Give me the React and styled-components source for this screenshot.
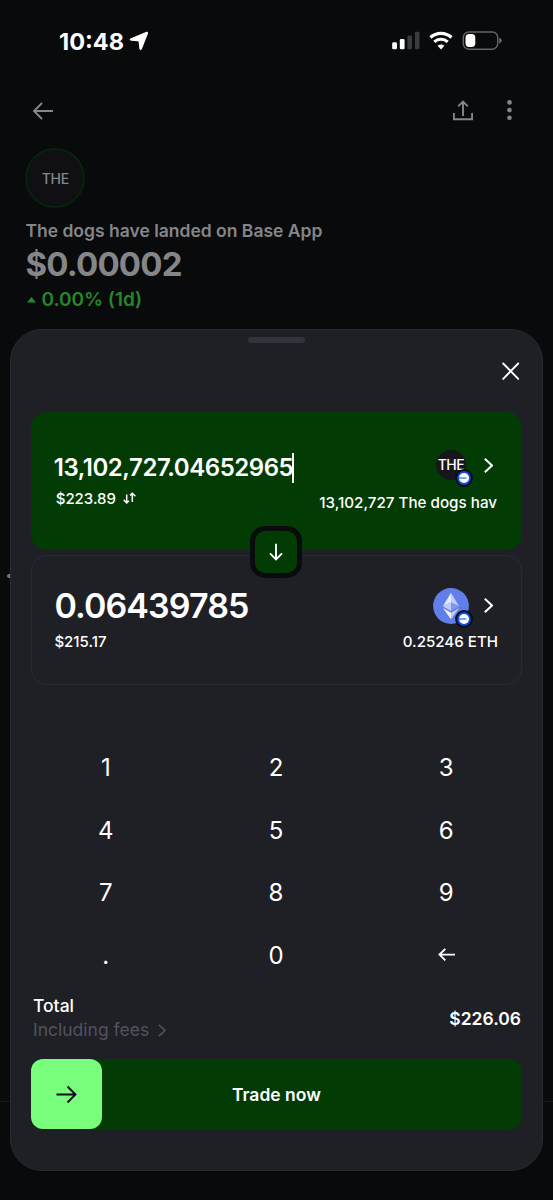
import React, { useState } from 'react';
import styled, { createGlobalStyle } from 'styled-components';

const KEYS = ['1', '2', '3', '4', '5', '6', '7', '8', '9', '.', '0', 'back'];

function ChevronIcon({ width = 8, height = 15, stroke = 2 }) {
  return (
    <svg width={width} height={height} viewBox={`0 0 ${width} ${height}`}>
      <path
        d={`M0.8 0.8L${width - 1} ${height / 2}L0.8 ${height - 0.8}`}
        fill="none"
        stroke="currentColor"
        strokeWidth={stroke}
      />
    </svg>
  );
}

function StatusIcons() {
  return (
    <svg width="112" height="20" viewBox="0 0 112 20">
      <rect x="2.2" y="11.3" width="4.8" height="7" rx="1.4" fill="#fff" />
      <rect x="9.8" y="8.1" width="4.8" height="10.2" rx="1.4" fill="#fff" />
      <rect x="17.4" y="4.6" width="4.6" height="13.7" rx="1.4" fill="#3a3b3d" />
      <rect x="24.9" y="0.8" width="4.6" height="17.5" rx="1.4" fill="#3a3b3d" />
      <path
        d="M40.5 6.5A15.4 15.4 0 0 1 61.5 6.5"
        fill="none"
        stroke="#fff"
        strokeWidth="3.2"
      />
      <path
        d="M44.3 10.9A9.8 9.8 0 0 1 57.7 10.9"
        fill="none"
        stroke="#fff"
        strokeWidth="3.1"
      />
      <path d="M51 18.4L47.6 14.8A5.4 5.4 0 0 1 54.4 14.8Z" fill="#fff" />
      <rect
        x="73.3"
        y="1"
        width="34.4"
        height="17.2"
        rx="5.4"
        fill="none"
        stroke="#646568"
        strokeWidth="1.4"
      />
      <rect x="75.5" y="3.1" width="9.8" height="12.8" rx="3.6" fill="#fff" />
      <path d="M109.3 6.8Q111.6 7.4 111.6 9.6T109.3 12.5Z" fill="#77787a" />
    </svg>
  );
}

function BaseBadge() {
  return (
    <Badge>
      <svg width="18" height="18" viewBox="0 0 18 18">
        <circle cx="9" cy="9" r="8.9" fill="#0a0b0d" />
        <circle cx="9" cy="9" r="6.9" fill="#0a4fe0" />
        <circle cx="9" cy="9" r="5" fill="#fff" />
        <path d="M4 9H11.5" stroke="#4b7bea" strokeWidth="1.4" />
      </svg>
    </Badge>
  );
}

function EthIcon() {
  return (
    <svg width="36" height="36" viewBox="0 0 36 36">
      <circle cx="18" cy="18" r="17.9" fill="#627eea" />
      <path d="M18 4.8L9.9 18.3L18 14.6Z" fill="#e4e9fc" />
      <path d="M18 4.8L26.1 18.3L18 14.6Z" fill="#c0cbf7" />
      <path d="M9.9 18.3L18 14.6V23Z" fill="#c0cbf7" />
      <path d="M26.1 18.3L18 14.6V23Z" fill="#8197ee" />
      <path d="M9.9 19.9L18 24.7V31.2Z" fill="#f2f4fe" />
      <path d="M26.1 19.9L18 24.7V31.2Z" fill="#c0cbf7" />
    </svg>
  );
}

function App() {
  const [amount, setAmount] = useState('13,102,727.04652965');

  const pressKey = key => {
    if (key === 'back') {
      setAmount(amount.slice(0, -1));
    } else {
      setAmount(amount + key);
    }
  };

  return (
    <Screen>
      <GlobalStyle />
      <BackgroundDot />
      <BackgroundLine />
      <StatusBar>
        <Clock>
          10:48
          <svg width="20" height="20" viewBox="0 0 20 20">
            <path
              d="M16.9 1Q19.7 0.2 18.8 3L13.1 17.6Q11.6 20.6 10.3 17.6L9.7 11.2Q9.6 10.4 8.8 10.3L2.2 9.8Q-0.8 8.8 1.9 7.2Z"
              fill="#fff"
            />
          </svg>
        </Clock>
        <StatusIcons />
      </StatusBar>
      <NavBar>
        <svg width="21" height="18" viewBox="0 0 21 18">
          <path
            d="M21 9H2M10 1L2 9L10 17"
            fill="none"
            stroke="currentColor"
            strokeWidth="1.9"
          />
        </svg>
        <NavActions>
          <svg width="20" height="21" viewBox="0 0 20 21">
            <path
              d="M0.9 13V19.2H19.1V13M10 16V1.6M5.2 6.4L10 1.6L14.8 6.4"
              fill="none"
              stroke="currentColor"
              strokeWidth="1.9"
            />
          </svg>
          <svg width="5" height="21" viewBox="0 0 5 21">
            <circle cx="2.5" cy="2.4" r="2.3" fill="currentColor" />
            <circle cx="2.5" cy="10.1" r="2.3" fill="currentColor" />
            <circle cx="2.5" cy="17.8" r="2.3" fill="currentColor" />
          </svg>
        </NavActions>
      </NavBar>
      <TokenHeader>
        <TokenLogo>THE</TokenLogo>
        <TokenName>The dogs have landed on Base App</TokenName>
        <TokenPrice>$0.00002</TokenPrice>
        <TokenChange>
          <svg width="9" height="6" viewBox="0 0 9 6">
            <path d="M0 5.6L4.5 0L9 5.6Z" fill="currentColor" />
          </svg>
          0.00% (1d)
        </TokenChange>
      </TokenHeader>

      <Sheet>
        <Handle />
        <CloseButton aria-label="Close">
          <svg width="18" height="18" viewBox="0 0 18 18">
            <path
              d="M1.2 1.5L16.2 16.9M16.2 1.5L1.2 16.9"
              stroke="currentColor"
              strokeWidth="1.9"
              strokeLinecap="round"
            />
          </svg>
        </CloseButton>

        <PayCard>
          <CardRow>
            <PayAmount>
              {amount}
              <Caret />
            </PayAmount>
            <TokenSelect>
              <TokenIcon>
                <SmallLogo>THE</SmallLogo>
                <BaseBadge />
              </TokenIcon>
              <ChevronIcon width={9} />
            </TokenSelect>
          </CardRow>
          <PayDetails>
            <Fiat>
              $223.89
              <svg width="14" height="13" viewBox="0 0 14 13">
                <path
                  d="M3.7 2.6V10.9M0.6 7.8L3.7 10.9L5.9 8.7M9.3 10V1.2M7.1 3.4L9.3 1.2L12.4 4.3"
                  fill="none"
                  stroke="currentColor"
                  strokeWidth="1.5"
                />
              </svg>
            </Fiat>
            <Balance $top={5} $size={15.2}>
              13,102,727 The dogs hav
            </Balance>
          </PayDetails>
          <SwapButton aria-label="Swap">
            <svg width="14" height="18" viewBox="0 0 14 18">
              <path
                d="M7 0.8V16M1 10.3L7 16.3L13 10.3"
                fill="none"
                stroke="currentColor"
                strokeWidth="1.9"
              />
            </svg>
          </SwapButton>
        </PayCard>

        <ReceiveCard>
          <CardRow>
            <ReceiveAmount>0.06439785</ReceiveAmount>
            <TokenSelect>
              <TokenIcon>
                <EthIcon />
                <BaseBadge />
              </TokenIcon>
              <ChevronIcon width={9} />
            </TokenSelect>
          </CardRow>
          <ReceiveDetails>
            <Fiat>$215.17</Fiat>
            <Balance $top={1} $size={15.1}>
              0.25246 ETH
            </Balance>
          </ReceiveDetails>
        </ReceiveCard>

        <Keypad>
          {KEYS.map(key => (
            <Key key={key} onClick={() => pressKey(key)}>
              {key === 'back' ? (
                <svg width="17" height="14" viewBox="0 0 17 14">
                  <path
                    d="M17 6.6H1.5M7.3 0.8L1.5 6.6L7.3 12.4"
                    fill="none"
                    stroke="currentColor"
                    strokeWidth="1.9"
                  />
                </svg>
              ) : (
                key
              )}
            </Key>
          ))}
        </Keypad>

        <Summary>
          <div>
            <TotalLabel>Total</TotalLabel>
            <Fees>
              Including fees
              <ChevronIcon width={8} height={13} stroke={1.6} />
            </Fees>
          </div>
          <TotalValue>$226.06</TotalValue>
        </Summary>

        <Slider>
          <SliderThumb>
            <svg width="21" height="18" viewBox="0 0 21 18">
              <path
                d="M0.5 9.5H19.2M11.5 1.5L19.5 9.5L11.5 17.5"
                fill="none"
                stroke="currentColor"
                strokeWidth="1.9"
              />
            </svg>
          </SliderThumb>
          <SliderLabel>Trade now</SliderLabel>
        </Slider>
      </Sheet>
    </Screen>
  );
}

const GlobalStyle = createGlobalStyle`
  * {
    box-sizing: border-box;
  }
  body {
    margin: 0;
    background: #090a0c;
    font-family: Inter, 'Liberation Sans', sans-serif;
  }
  svg {
    display: block;
    flex-shrink: 0;
  }
  button {
    padding: 0;
    border: none;
    background: none;
    color: inherit;
    font: inherit;
  }
`;

const Screen = styled.main`
  position: relative;
  width: 553px;
  height: 1200px;
  overflow: hidden;
  background: #090a0c;
  color: #fff;
`;

const BackgroundDot = styled.div`
  position: absolute;
  top: 573.5px;
  left: 7px;
  width: 5px;
  height: 4px;
  border-radius: 2px;
  background: #77787a;
`;

const BackgroundLine = styled.div`
  position: absolute;
  top: 1101px;
  left: 0;
  width: 100%;
  height: 1px;
  background: #17181b;
`;

const StatusBar = styled.div`
  display: flex;
  align-items: flex-start;
  justify-content: space-between;
  height: 82px;
  padding: 31px 51px 0 59px;
`;

const Clock = styled.div`
  display: flex;
  align-items: center;
  gap: 5px;
  height: 20px;
  font-size: 23.5px;
  font-weight: 700;
`;

const NavBar = styled.div`
  display: flex;
  align-items: center;
  justify-content: space-between;
  height: 57px;
  padding: 0 41px 0 32px;
  color: #86878a;
`;

const NavActions = styled.div`
  display: flex;
  gap: 34px;
`;

const TokenHeader = styled.div`
  height: 190px;
  padding: 9px 25px 0 25.4px;
  color: #858688;
`;

const TokenLogo = styled.div`
  display: flex;
  align-items: center;
  justify-content: center;
  width: 60px;
  height: 60px;
  border: 2px solid #06230c;
  border-radius: 50%;
  background: #0f0f14;
  font-size: 14px;
  font-weight: 500;
  letter-spacing: -0.2px;
`;

const TokenName = styled.div`
  margin-top: 11px;
  font-size: 17.5px;
  font-weight: 600;
  line-height: 24px;
`;

const TokenPrice = styled.div`
  font-size: 33px;
  font-weight: 700;
  line-height: 43px;
  letter-spacing: -0.8px;
`;

const TokenChange = styled.div`
  display: flex;
  align-items: center;
  gap: 5px;
  padding: 1px 0 0 2px;
  color: #25872a;
  font-size: 19px;
  font-weight: 600;
  line-height: 26px;
`;

const Sheet = styled.section`
  position: relative;
  width: 533px;
  height: 842px;
  margin-left: 10px;
  padding: 7px 20.5px 0 20.4px;
  border: 1px solid #292a2e;
  border-radius: 32px;
  background: #1f2025;
`;

const Handle = styled.div`
  width: 57px;
  height: 6px;
  margin: 0 auto;
  border-radius: 3px;
  background: #32333d;
`;

const CloseButton = styled.button`
  display: block;
  margin: 19px 1.5px 0 auto;
`;

const PayCard = styled.div`
  position: relative;
  height: 138.5px;
  margin-top: 31.5px;
  padding: 35.5px 24.5px 0 22.3px;
  border-radius: 16px;
  background: #033b05;
`;

const CardRow = styled.div`
  display: flex;
  align-items: center;
  justify-content: space-between;
  height: 36px;
`;

const PayAmount = styled.div`
  display: flex;
  align-items: center;
  padding-top: 5px;
  font-size: 24px;
  font-weight: 600;
  letter-spacing: -0.45px;
`;

const Caret = styled.span`
  width: 2px;
  height: 30px;
  margin-left: -1px;
  background: #fff;
`;

const TokenSelect = styled.div`
  display: flex;
  align-items: center;
  gap: 14.5px;
  padding-right: 4.5px;
`;

const TokenIcon = styled.div`
  position: relative;
  display: flex;
  align-items: center;
  justify-content: center;
  width: 36px;
  height: 36px;
`;

const SmallLogo = styled.div`
  display: flex;
  align-items: center;
  justify-content: center;
  width: 30px;
  height: 30px;
  padding-bottom: 1px;
  border-radius: 50%;
  background: #17161d;
  font-size: 14px;
  font-weight: 500;
  letter-spacing: -0.5px;
`;

const Badge = styled.div`
  position: absolute;
  right: -4px;
  bottom: -4px;
`;

const PayDetails = styled.div`
  display: flex;
  justify-content: space-between;
  padding: 5px 0 0 2px;
`;

const Fiat = styled.div`
  display: flex;
  align-items: center;
  gap: 7px;
  height: 20px;
  font-size: 15px;
  font-weight: 500;
`;

const Balance = styled.div`
  height: 20px;
  margin-top: ${({ $top }) => $top}px;
  font-size: ${({ $size }) => $size}px;
  font-weight: 500;
  line-height: 20px;
`;

const SwapButton = styled.button`
  position: absolute;
  bottom: -28px;
  left: 219px;
  display: flex;
  align-items: center;
  justify-content: center;
  width: 52px;
  height: 52px;
  border: 5px solid #0a0b0d;
  border-radius: 15px;
  background: #033b05;
`;

const ReceiveCard = styled.div`
  height: 130px;
  margin-top: 5px;
  padding: 31.5px 22.5px 0 22px;
  border: 1px solid #2a2b2f;
  border-radius: 16px;

  ${TokenSelect} {
    padding-right: 5.5px;
  }
`;

const ReceiveAmount = styled.div`
  font-size: 34px;
  font-weight: 600;
  letter-spacing: -0.9px;
`;

const ReceiveDetails = styled.div`
  display: flex;
  justify-content: space-between;
  padding-top: 7.5px;
`;

const Keypad = styled.div`
  display: grid;
  grid-template-columns: repeat(3, 1fr);
  grid-auto-rows: 62.7px;
  width: 510.5px;
  margin: 51px 0 0 -10.7px;
`;

const Key = styled.button`
  display: flex;
  align-items: center;
  justify-content: center;
  font-size: 24px;
`;

const Summary = styled.div`
  display: flex;
  align-items: center;
  justify-content: space-between;
  height: 48px;
  margin-top: 7.5px;
  padding: 0 0.5px 0 1.6px;
`;

const TotalLabel = styled.div`
  font-size: 17.5px;
  font-weight: 500;
  line-height: 24px;
`;

const Fees = styled.div`
  display: flex;
  align-items: center;
  gap: 9px;
  color: #50525f;
  font-size: 17.5px;
  line-height: 24px;
`;

const TotalValue = styled.div`
  font-size: 17.5px;
  font-weight: 600;
`;

const Slider = styled.div`
  position: relative;
  display: flex;
  align-items: center;
  justify-content: center;
  height: 70px;
  margin-top: 17px;
  border-radius: 12px;
  background: #033b05;
`;

const SliderThumb = styled.div`
  position: absolute;
  top: 0;
  left: 0;
  display: flex;
  align-items: center;
  justify-content: center;
  width: 70.5px;
  height: 70px;
  border-radius: 12px;
  background: #78fe7c;
  color: #0a0b0d;
`;

const SliderLabel = styled.span`
  font-size: 17.5px;
  font-weight: 600;
`;

export default App;
